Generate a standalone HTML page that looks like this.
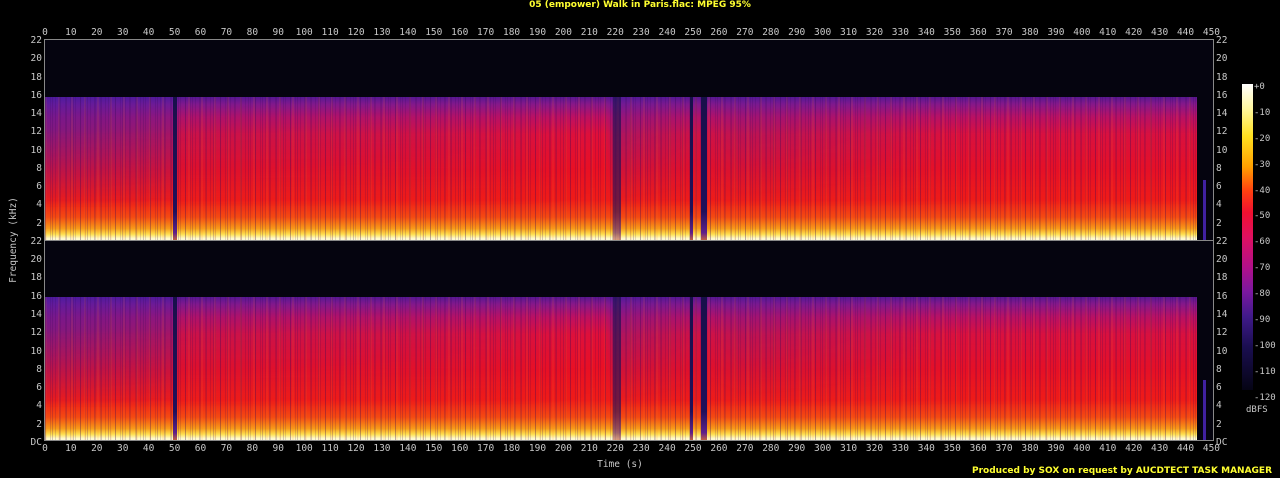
<!DOCTYPE html>
<html><head><meta charset="utf-8"><style>
*{margin:0;padding:0;box-sizing:border-box}
body{width:1280px;height:478px;background:#000;position:relative;overflow:hidden;font-family:"DejaVu Sans Mono","Liberation Mono",monospace;font-size:9.5px;color:#c8c8c8}
.a{position:absolute}
.title{left:0;width:1280px;top:0;text-align:center;color:#ffff30;font-weight:bold;font-family:"DejaVu Sans","Liberation Sans",sans-serif;font-size:9px;line-height:11px}
.foot{right:8px;top:466px;color:#ffff30;font-weight:bold;font-family:"DejaVu Sans","Liberation Sans",sans-serif;font-size:9px}
.xr{display:flex;left:32px}
.xr span{width:25.93px;text-align:center;flex:none;line-height:10px}
.yc{display:flex;flex-direction:column}
.yc span{height:18.27px;line-height:18.27px;flex:none}
.ch{left:45px;width:1168px;height:200px;background:#05040f;overflow:hidden}
.band{left:0;top:57px;width:1152px;height:143px;background:linear-gradient(#5a1890 0%,#8a1888 5%,#c01060 14%,#e0103a 26%,#ea1024 50%,#f01c18 72%,#f44a12 84%,#f89a18 92%,#ffe050 96%,#fffbd0 99%)}
.tex{left:0;top:57px;width:1152px;height:143px;background:
repeating-linear-gradient(90deg,rgba(60,10,90,.22) 0 1px,transparent 1px 7px),
repeating-linear-gradient(90deg,rgba(255,120,40,.1) 0 2px,transparent 2px 13px),
repeating-linear-gradient(90deg,rgba(40,0,80,.15) 0 1px,transparent 1px 5px)}
.blu{left:0;top:57px;width:1152px;height:110px;background:linear-gradient(90deg,rgba(70,30,170,.6) 0px,rgba(70,30,170,.4) 130px,rgba(70,30,170,.15) 135px,rgba(70,30,170,.1) 400px,rgba(70,30,170,0) 560px,rgba(70,30,170,.35) 570px,rgba(70,30,170,.1) 660px,rgba(70,30,170,.25) 700px,rgba(70,30,170,.05) 900px,rgba(70,30,170,.05) 1152px);-webkit-mask:linear-gradient(#000 0%,#000 30%,transparent 100%);mask:linear-gradient(#000 0%,#000 30%,transparent 100%)}
.gap{top:57px;height:143px;background:linear-gradient(#18104a,#20105a 80%,#60208a 95%,#c06040)}
.fr{border:1px solid #888}
</style></head><body>
<div class="a title">05 (empower) Walk in Paris.flac: MPEG 95%</div>

<div class="a xr" style="top:28px"><span>0</span><span>10</span><span>20</span><span>30</span><span>40</span><span>50</span><span>60</span><span>70</span><span>80</span><span>90</span><span>100</span><span>110</span><span>120</span><span>130</span><span>140</span><span>150</span><span>160</span><span>170</span><span>180</span><span>190</span><span>200</span><span>210</span><span>220</span><span>230</span><span>240</span><span>250</span><span>260</span><span>270</span><span>280</span><span>290</span><span>300</span><span>310</span><span>320</span><span>330</span><span>340</span><span>350</span><span>360</span><span>370</span><span>380</span><span>390</span><span>400</span><span>410</span><span>420</span><span>430</span><span>440</span><span>450</span></div>
<div class="a xr" style="top:444px"><span>0</span><span>10</span><span>20</span><span>30</span><span>40</span><span>50</span><span>60</span><span>70</span><span>80</span><span>90</span><span>100</span><span>110</span><span>120</span><span>130</span><span>140</span><span>150</span><span>160</span><span>170</span><span>180</span><span>190</span><span>200</span><span>210</span><span>220</span><span>230</span><span>240</span><span>250</span><span>260</span><span>270</span><span>280</span><span>290</span><span>300</span><span>310</span><span>320</span><span>330</span><span>340</span><span>350</span><span>360</span><span>370</span><span>380</span><span>390</span><span>400</span><span>410</span><span>420</span><span>430</span><span>440</span><span>450</span></div>

<div class="a yc" style="left:22px;width:20px;top:32px;text-align:right"><span>22</span><span>20</span><span>18</span><span>16</span><span>14</span><span>12</span><span>10</span><span>8</span><span>6</span><span>4</span><span>2</span><span>22</span><span>20</span><span>18</span><span>16</span><span>14</span><span>12</span><span>10</span><span>8</span><span>6</span><span>4</span><span>2</span><span>DC</span></div>
<div class="a yc" style="left:1216px;width:24px;top:32px"><span>22</span><span>20</span><span>18</span><span>16</span><span>14</span><span>12</span><span>10</span><span>8</span><span>6</span><span>4</span><span>2</span><span>22</span><span>20</span><span>18</span><span>16</span><span>14</span><span>12</span><span>10</span><span>8</span><span>6</span><span>4</span><span>2</span><span>DC</span></div>

<div class="a" style="left:4px;top:240px;transform:translateY(-50%) rotate(-90deg);transform-origin:center;width:20px;height:10px;text-align:center;white-space:nowrap;line-height:10px;display:flex;justify-content:center">Frequency (kHz)</div>
<div class="a" style="left:590px;top:459px;width:60px;text-align:center">Time (s)</div>

<div class="a ch" style="top:40px">
<div class="a band"></div><div class="a blu"></div><div class="a tex"></div>
<div class="a gap" style="left:128px;width:4px"></div>
<div class="a gap" style="left:568px;width:8px;opacity:.6"></div>
<div class="a gap" style="left:645px;width:3px"></div>
<div class="a gap" style="left:656px;width:6px"></div>
<div class="a" style="left:1158px;top:140px;width:3px;height:60px;background:#4020a0"></div>
</div>
<div class="a ch" style="top:240px">
<div class="a band"></div><div class="a blu"></div><div class="a tex"></div>
<div class="a gap" style="left:128px;width:4px"></div>
<div class="a gap" style="left:568px;width:8px;opacity:.6"></div>
<div class="a gap" style="left:645px;width:3px"></div>
<div class="a gap" style="left:656px;width:6px"></div>
<div class="a" style="left:1158px;top:140px;width:3px;height:60px;background:#4020a0"></div>
</div>
<div class="a fr" style="left:44px;top:39px;width:1170px;height:402px"></div>
<div class="a" style="left:44px;top:240px;width:1170px;height:1px;background:#888"></div>

<div class="a" style="left:1242px;top:84px;width:11px;height:306px;background:linear-gradient(#ffffff 0%,#fff8a0 8%,#ffe020 17%,#ffa000 27%,#ff4010 35%,#f01030 42%,#e01060 50%,#b0108a 60%,#7a18a0 68%,#401a8a 76%,#1a0e50 86%,#050414 100%)"></div>
<div class="a yc" style="left:1254px;top:78px;font-size:9px"><span style="height:25.9px;line-height:18px">+0</span><span style="height:25.9px;line-height:18px">-10</span><span style="height:25.9px;line-height:18px">-20</span><span style="height:25.9px;line-height:18px">-30</span><span style="height:25.9px;line-height:18px">-40</span><span style="height:25.9px;line-height:18px">-50</span><span style="height:25.9px;line-height:18px">-60</span><span style="height:25.9px;line-height:18px">-70</span><span style="height:25.9px;line-height:18px">-80</span><span style="height:25.9px;line-height:18px">-90</span><span style="height:25.9px;line-height:18px">-100</span><span style="height:25.9px;line-height:18px">-110</span><span style="height:25.9px;line-height:18px">-120</span></div>
<div class="a" style="left:1246px;top:405px;font-size:9px">dBFS</div>

<div class="a foot">Produced by SOX on request by AUCDTECT TASK MANAGER</div>
</body></html>
